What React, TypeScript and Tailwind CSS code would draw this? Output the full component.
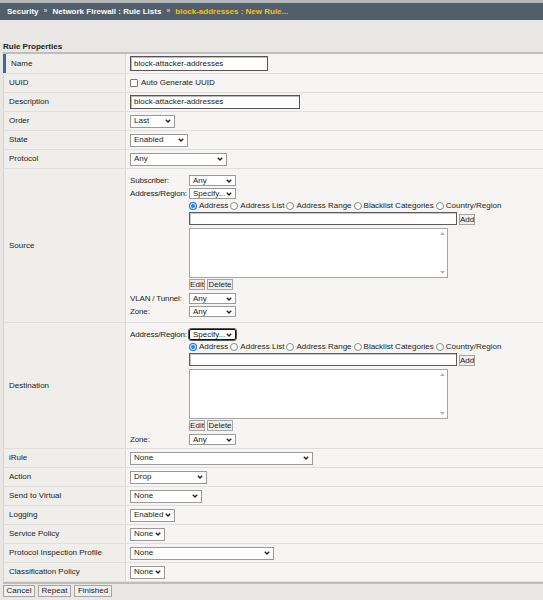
import type { ReactNode } from 'react'

// BIG-IP style "New Rule" form, rendered at the screenshot's scaled-down size (8px type).

function Chevron() {
  return (
    <svg width="6" height="4" viewBox="0 0 6 4" className="shrink-0">
      <path d="M0.8 0.8 L3 3 L5.2 0.8" fill="none" stroke="#222" strokeWidth="1.4" />
    </svg>
  )
}

function Sel({ v, w, h = 'h-[13px]', focus = false }: { v: string; w: string; h?: string; focus?: boolean }) {
  return (
    <div
      className={`${w} ${h} flex items-center justify-between bg-white pl-[3px] pr-[3px] leading-none ${
        focus ? 'rounded-[2px] border border-[#111] outline outline-1 outline-[#555]' : 'border border-[#9a9a9a]'
      }`}
    >
      <span>{v}</span>
      <Chevron />
    </div>
  )
}

function Btn({ children, cls = '' }: { children: ReactNode; cls?: string }) {
  return (
    <div className={`flex h-[11px] items-center justify-center border border-[#a5a5a5] bg-[#efefef] px-[1px] leading-none ${cls}`}>
      {children}
    </div>
  )
}

function Radio({ on = false }: { on?: boolean }) {
  return on ? (
    <span className="flex h-[8px] w-[8px] shrink-0 items-center justify-center rounded-full bg-[#1a73e8]">
      <span className="h-[4px] w-[4px] rounded-full bg-[#2f80f0] ring-1 ring-[#d8e6fb]" />
    </span>
  ) : (
    <span className="h-[8px] w-[8px] shrink-0 rounded-full border border-[#8a8a8a] bg-white" />
  )
}

function Row({ label, h = 'h-[19px]', first = false, top = false, children }: { label: string; h?: string; first?: boolean; top?: boolean; children: ReactNode }) {
  return (
    <div className={`flex ${h} border-b border-[#e0dfdb]`}>
      <div
        className={`flex w-[123px] shrink-0 items-center border-r border-[#d9d8d4] bg-[#efeeeb] pl-[5px] ${
          first ? 'border-l-[3px] border-l-[#3b6b99]' : 'border-l border-l-[#d2d1cd] pl-[5px]'
        }`}
      >
        {label}
      </div>
      <div className={`flex flex-1 bg-[#f6f5f3] pl-[4px] ${top ? 'flex-col' : 'items-center'}`}>{children}</div>
    </div>
  )
}

function SubLine({ label = '', h, children }: { label?: string; h: string; children?: ReactNode }) {
  return (
    <div className={`flex ${h} items-start`}>
      <div className="flex h-[13px] w-[59px] shrink-0 items-center whitespace-nowrap tracking-[-0.15px]">{label}</div>
      <div className="flex flex-1 items-start">{children}</div>
    </div>
  )
}

function AddressPicker() {
  const opts = ['Address', 'Address List', 'Address Range', 'Blacklist Categories', 'Country/Region']
  return (
    <>
      <SubLine h="h-[12px]">
        <div className="flex h-[12px] items-center gap-[2px]">
          {opts.map((o, i) => (
            <span key={o} className="flex items-center gap-[2px]">
              <Radio on={i === 0} />
              <span>{o}</span>
            </span>
          ))}
        </div>
      </SubLine>
      <SubLine h="h-[15px]">
        <div className="h-[13px] w-[268px] border border-[#5c5c5c] bg-white shadow-[inset_1px_1px_0_#c8c8c8]" />
        <Btn cls="ml-[2px] mt-[2px] w-[16px]">Add</Btn>
      </SubLine>
      <SubLine h="h-[52px]">
        <div className="mt-[1px] flex h-[50px] w-[259px] justify-end border border-[#a6a6a6] bg-white">
          <div className="flex w-[9px] flex-col items-center justify-between py-[3px]">
            <svg width="5" height="3" viewBox="0 0 5 3"><path d="M0 3 L2.5 0 L5 3 Z" fill="#b5b5b5" /></svg>
            <svg width="5" height="3" viewBox="0 0 5 3"><path d="M0 0 L2.5 3 L5 0 Z" fill="#b5b5b5" /></svg>
          </div>
        </div>
      </SubLine>
      <SubLine h="h-[13px]">
        <div className="flex gap-[2px]">
          <Btn cls="w-[16px]">Edit</Btn>
          <Btn cls="w-[26px]">Delete</Btn>
        </div>
      </SubLine>
    </>
  )
}

export default function App() {
  return (
    <div className="min-h-[600px] w-[543px] bg-[#e8e7e3] font-['Liberation_Sans',Arial,sans-serif] text-[8px] text-[#222]">
      <div className="h-[3px] bg-[#b3b8bd]" />
      <div className="flex h-[17px] items-center bg-[#525e6a] pl-[7px] font-bold text-white">
        <span>Security</span>
        <span className="mx-[5px] text-[7px] text-[#c9ced3]">»</span>
        <span>Network Firewall : Rule Lists</span>
        <span className="mx-[5px] text-[7px] text-[#c9ced3]">»</span>
        <span className="text-[#f2c40c]">block-addresses : New Rule...</span>
      </div>
      <div className="flex h-[32px] items-end pl-[3px] font-bold leading-[10px]">Rule Properties</div>
      <div className="ml-[3px] border-y-2 border-y-[#bdbdbb]">
        <Row label="Name" h="h-[20px]" first>
          <div className="flex h-[15px] w-[138px] items-center border border-[#555] bg-white pl-[3px] shadow-[inset_1px_1px_0_#bbb]">block-attacker-addresses</div>
        </Row>
        <Row label="UUID">
          <span className="h-[8px] w-[8px] rounded-[1px] border border-[#777] bg-white" />
          <span className="ml-[3px]">Auto Generate UUID</span>
        </Row>
        <Row label="Description">
          <div className="flex h-[14px] w-[170px] items-center border border-[#555] bg-white pl-[3px] shadow-[inset_1px_1px_0_#bbb]">block-attacker-addresses</div>
        </Row>
        <Row label="Order"><Sel v="Last" w="w-[45px]" /></Row>
        <Row label="State"><Sel v="Enabled" w="w-[58px]" /></Row>
        <Row label="Protocol"><Sel v="Any" w="w-[97px]" /></Row>
        <Row label="Source" h="h-[154px]" top>
          <div className="pt-[5px]">
            <SubLine label="Subscriber:" h="h-[13px]"><div className="pt-[1px]"><Sel v="Any" w="w-[47px]" h="h-[11px]" /></div></SubLine>
            <SubLine label="Address/Region:" h="h-[13px]"><div className="pt-[1px]"><Sel v="Specify..." w="w-[47px]" h="h-[11px]" /></div></SubLine>
            <AddressPicker />
            <SubLine label="VLAN / Tunnel:" h="h-[13px]"><div className="pt-[1px]"><Sel v="Any" w="w-[47px]" h="h-[11px]" /></div></SubLine>
            <SubLine label="Zone:" h="h-[14px]"><div className="pt-[1px]"><Sel v="Any" w="w-[47px]" h="h-[11px]" /></div></SubLine>
          </div>
        </Row>
        <Row label="Destination" h="h-[126px]" top>
          <div className="pt-[5px]">
            <SubLine label="Address/Region:" h="h-[13px]"><div className="pt-[1px]"><Sel v="Specify..." w="w-[47px]" h="h-[11px]" focus /></div></SubLine>
            <AddressPicker />
            <SubLine label="Zone:" h="h-[13px]"><div className="pt-[1px]"><Sel v="Any" w="w-[47px]" h="h-[11px]" /></div></SubLine>
          </div>
        </Row>
        <Row label="iRule"><Sel v="None" w="w-[183px]" /></Row>
        <Row label="Action"><Sel v="Drop" w="w-[77px]" /></Row>
        <Row label="Send to Virtual"><Sel v="None" w="w-[72px]" /></Row>
        <Row label="Logging"><Sel v="Enabled" w="w-[45px]" /></Row>
        <Row label="Service Policy"><Sel v="None" w="w-[35px]" /></Row>
        <Row label="Protocol Inspection Profile"><Sel v="None" w="w-[144px]" /></Row>
        <Row label="Classification Policy"><Sel v="None" w="w-[35px]" /></Row>
      </div>
      <div className="flex gap-[3px] pl-[3px] pt-[1px]">
        <Btn cls="h-[12px] w-[32px]">Cancel</Btn>
        <Btn cls="h-[12px] w-[33px]">Repeat</Btn>
        <Btn cls="h-[12px] w-[38px]">Finished</Btn>
      </div>
    </div>
  )
}
